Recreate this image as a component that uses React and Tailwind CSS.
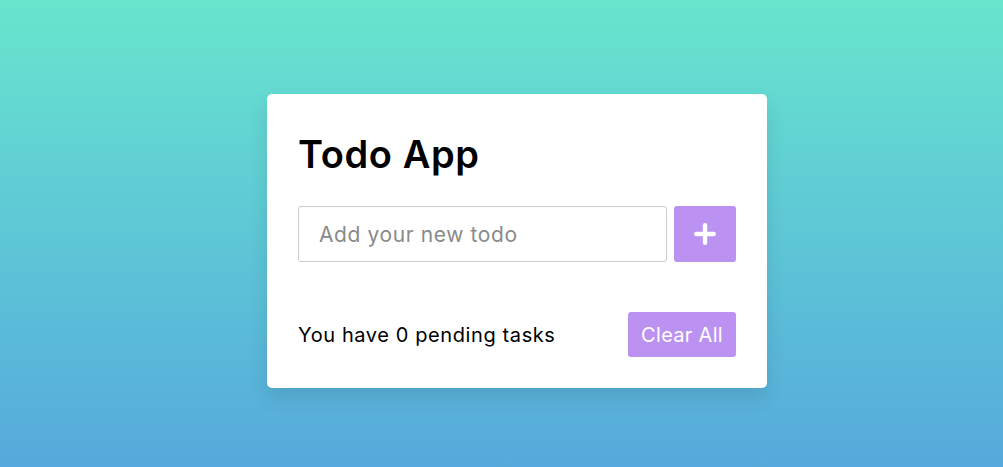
import React, { useState } from 'react';
import { Plus } from 'lucide-react';

const App = () => {
  const [todo, setTodo] = useState('');
  const [todos, setTodos] = useState([]);

  const addTodo = () => {
    if (!todo.trim()) return;
    setTodos([...todos, todo.trim()]);
    setTodo('');
  };

  return (
    <div className="h-[467px] overflow-hidden bg-gradient-to-b from-[#68e5cd] to-[#56a9dc] font-['Inter',sans-serif]">
      <div className="flex justify-center pl-[31px] pt-[94px]">
        {/* Card */}
        <div className="w-[500px] rounded-[5px] bg-white p-[31px] shadow-[0_10px_20px_rgba(0,0,0,0.1)]">
          <h1 className="mt-[4px] h-[50px] text-[38px] font-semibold leading-[50px] tracking-[0.6px] text-black">Todo App</h1>

          <div className="mt-[27px] flex gap-[7px]">
            <input
              value={todo}
              onChange={(e) => setTodo(e.target.value)}
              placeholder="Add your new todo"
              className="h-[56px] w-[369px] rounded-[3px] border border-[#cccccc] px-[20px] text-[21px] tracking-[0.6px] text-black outline-none placeholder:text-[#8a8a8a]"
            />
            <button
              onClick={addTodo}
              className="flex h-[56px] w-[62px] items-center justify-center rounded-[3px] bg-[#bb92f1] text-white"
            >
              <Plus size={30} strokeWidth={3.5} />
            </button>
          </div>

          <div className="mt-[50px] flex items-center justify-between">
            <p className="text-[20px] tracking-[0.6px] text-black">You have {todos.length} pending tasks</p>
            <button
              onClick={() => setTodos([])}
              className="h-[45px] rounded-[3px] bg-[#bb92f1] px-[13px] text-[20px] tracking-[0.3px] text-white"
            >
              Clear All
            </button>
          </div>
        </div>
      </div>
    </div>
  );
};

export default App;
